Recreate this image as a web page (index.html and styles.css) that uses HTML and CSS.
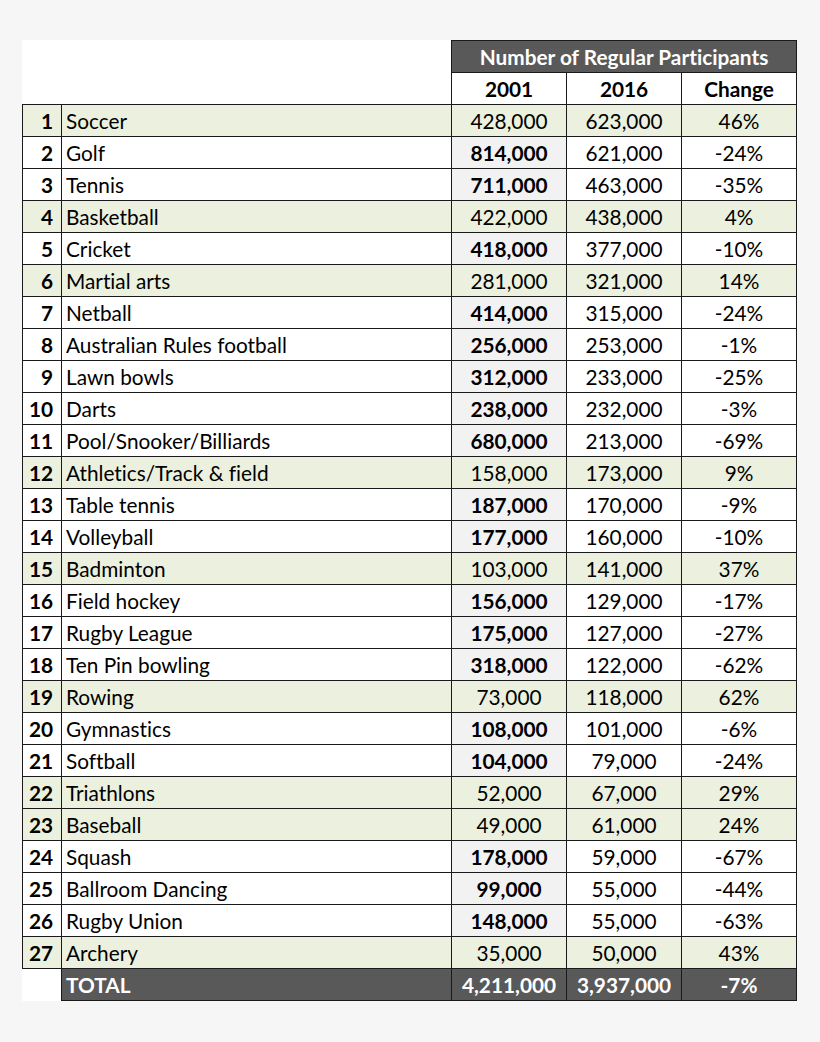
FILE: index.html
```html
<!DOCTYPE html>
<html lang="en">
<head>
  <meta charset="UTF-8">
  <meta name="viewport" content="width=device-width, initial-scale=1.0">
  <title>Number of Regular Participants</title>
  <link rel="stylesheet" href="styles.css">
</head>
<body>

  <table class="sports">
    <colgroup>
      <col class="col-rank">
      <col class="col-name">
      <col class="col-num">
      <col class="col-num">
      <col class="col-num">
    </colgroup>
    <thead>
      <tr>
        <th class="blank"></th>
        <th class="blank"></th>
        <th class="dark" colspan="3">Number of Regular Participants</th>
      </tr>
      <tr>
        <th class="blank"></th>
        <th class="blank"></th>
        <th class="year">2001</th>
        <th class="year">2016</th>
        <th class="year">Change</th>
      </tr>
    </thead>
    <tbody>
      <tr class="up"><td class="rank">1</td><td class="name">Soccer</td><td>428,000</td><td>623,000</td><td>46%</td></tr>
      <tr><td class="rank">2</td><td class="name">Golf</td><td class="high">814,000</td><td>621,000</td><td>-24%</td></tr>
      <tr><td class="rank">3</td><td class="name">Tennis</td><td class="high">711,000</td><td>463,000</td><td>-35%</td></tr>
      <tr class="up"><td class="rank">4</td><td class="name">Basketball</td><td>422,000</td><td>438,000</td><td>4%</td></tr>
      <tr><td class="rank">5</td><td class="name">Cricket</td><td class="high">418,000</td><td>377,000</td><td>-10%</td></tr>
      <tr class="up"><td class="rank">6</td><td class="name">Martial arts</td><td>281,000</td><td>321,000</td><td>14%</td></tr>
      <tr><td class="rank">7</td><td class="name">Netball</td><td class="high">414,000</td><td>315,000</td><td>-24%</td></tr>
      <tr><td class="rank">8</td><td class="name">Australian Rules football</td><td class="high">256,000</td><td>253,000</td><td>-1%</td></tr>
      <tr><td class="rank">9</td><td class="name">Lawn bowls</td><td class="high">312,000</td><td>233,000</td><td>-25%</td></tr>
      <tr><td class="rank">10</td><td class="name">Darts</td><td class="high">238,000</td><td>232,000</td><td>-3%</td></tr>
      <tr><td class="rank">11</td><td class="name">Pool/Snooker/Billiards</td><td class="high">680,000</td><td>213,000</td><td>-69%</td></tr>
      <tr class="up"><td class="rank">12</td><td class="name">Athletics/Track &amp; field</td><td>158,000</td><td>173,000</td><td>9%</td></tr>
      <tr><td class="rank">13</td><td class="name">Table tennis</td><td class="high">187,000</td><td>170,000</td><td>-9%</td></tr>
      <tr><td class="rank">14</td><td class="name">Volleyball</td><td class="high">177,000</td><td>160,000</td><td>-10%</td></tr>
      <tr class="up"><td class="rank">15</td><td class="name">Badminton</td><td>103,000</td><td>141,000</td><td>37%</td></tr>
      <tr><td class="rank">16</td><td class="name">Field hockey</td><td class="high">156,000</td><td>129,000</td><td>-17%</td></tr>
      <tr><td class="rank">17</td><td class="name">Rugby League</td><td class="high">175,000</td><td>127,000</td><td>-27%</td></tr>
      <tr><td class="rank">18</td><td class="name">Ten Pin bowling</td><td class="high">318,000</td><td>122,000</td><td>-62%</td></tr>
      <tr class="up"><td class="rank">19</td><td class="name">Rowing</td><td>73,000</td><td>118,000</td><td>62%</td></tr>
      <tr><td class="rank">20</td><td class="name">Gymnastics</td><td class="high">108,000</td><td>101,000</td><td>-6%</td></tr>
      <tr><td class="rank">21</td><td class="name">Softball</td><td class="high">104,000</td><td>79,000</td><td>-24%</td></tr>
      <tr class="up"><td class="rank">22</td><td class="name">Triathlons</td><td>52,000</td><td>67,000</td><td>29%</td></tr>
      <tr class="up"><td class="rank">23</td><td class="name">Baseball</td><td>49,000</td><td>61,000</td><td>24%</td></tr>
      <tr><td class="rank">24</td><td class="name">Squash</td><td class="high">178,000</td><td>59,000</td><td>-67%</td></tr>
      <tr><td class="rank">25</td><td class="name">Ballroom Dancing</td><td class="high">99,000</td><td>55,000</td><td>-44%</td></tr>
      <tr><td class="rank">26</td><td class="name">Rugby Union</td><td class="high">148,000</td><td>55,000</td><td>-63%</td></tr>
      <tr class="up"><td class="rank">27</td><td class="name">Archery</td><td>35,000</td><td>50,000</td><td>43%</td></tr>
    </tbody>
    <tfoot>
      <tr>
        <td class="blank"></td>
        <td class="dark name">TOTAL</td>
        <td class="dark">4,211,000</td>
        <td class="dark">3,937,000</td>
        <td class="dark">-7%</td>
      </tr>
    </tfoot>
  </table>

</body>
</html>
```

FILE: styles.css
```css
body {
  font-family: 'Lato', 'Open Sans', sans-serif;
  background-color: #f6f6f6;
  margin: 0;
  padding: 40px 0 0 22px;
}
.sports {
  width: 775px;
  table-layout: fixed;
  border-collapse: collapse;
  background-color: #fff;
  font-size: 20.8px;
  font-variant-ligatures: no-common-ligatures;
  color: #000;
}
.col-rank {
  width: 39px;
}
.col-name {
  width: 390px;
}
.col-num {
  width: 115px;
}
.sports tr {
  height: 32px;
}
.sports th, .sports td {
  border: 1px solid #1a1a1a;
  padding: 0 4px 1px;
  text-align: center;
  white-space: nowrap;
}
.sports th {
  font-weight: bold;
}
.sports .blank {
  border: none;
  background-color: #fff;
}
.sports .dark {
  background-color: #595959;
  color: #fff;
  font-weight: bold;
}
.sports .rank {
  text-align: right;
  font-weight: bold;
  padding-right: 8px;
}
.sports .name {
  text-align: left;
}
.sports .up td {
  background-color: #ebf1de;
}
.sports .high {
  background-color: #f2f2f2;
  font-weight: bold;
}
```
